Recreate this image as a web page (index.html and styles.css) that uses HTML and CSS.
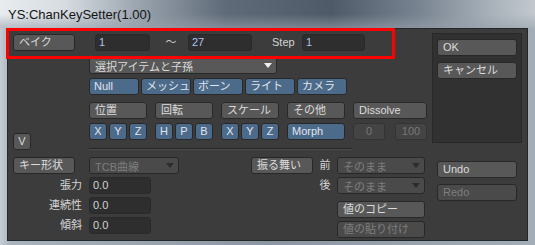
FILE: index.html
```html
<!DOCTYPE html>
<html lang="ja">
<head>
    <meta charset="UTF-8">
    <title>YS:ChanKeySetter(1.00)</title>
    <link rel="stylesheet" href="styles.css">
</head>
<body>
<div class="window">
    <div class="titlebar">YS:ChanKeySetter(1.00)</div>

    <div class="client">
        <div class="main">
            <!-- Bake range -->
            <div class="bake-row">
                <button class="btn bake">ベイク</button>
                <span class="field from">1</span>
                <span class="tilde">～</span>
                <span class="field to">27</span>
                <span class="lbl step">Step</span>
                <span class="field step-val">1</span>
            </div>

            <!-- Target & channels -->
            <div class="mid">
                <div class="mid-left">
                    <button class="btn v-btn">V</button>
                </div>
                <div class="mid-body">
                    <div class="popup target">選択アイテムと子孫<i class="arrow"></i></div>
                    <div class="types">
                        <button class="btn blue">Null</button>
                        <button class="btn blue">メッシュ</button>
                        <button class="btn blue">ボーン</button>
                        <button class="btn blue">ライト</button>
                        <button class="btn blue">カメラ</button>
                    </div>
                    <div class="channels">
                        <button class="btn">位置</button>
                        <button class="btn">回転</button>
                        <button class="btn">スケール</button>
                        <button class="btn">その他</button>
                        <button class="btn">Dissolve</button>

                        <div class="axes">
                            <button class="btn blue sq">X</button>
                            <button class="btn blue sq">Y</button>
                            <button class="btn blue sq">Z</button>
                        </div>
                        <div class="axes">
                            <button class="btn blue sq">H</button>
                            <button class="btn blue sq">P</button>
                            <button class="btn blue sq">B</button>
                        </div>
                        <div class="axes">
                            <button class="btn blue sq">X</button>
                            <button class="btn blue sq">Y</button>
                            <button class="btn blue sq">Z</button>
                        </div>
                        <button class="btn blue">Morph</button>
                        <div class="dissolve-range">
                            <span class="field off">0</span>
                            <span class="field off">100</span>
                        </div>
                    </div>
                    <div class="sep"></div>
                </div>
            </div>

            <!-- Key shape & behaviour -->
            <div class="bottom">
                <div class="bottom-left">
                    <button class="btn bake">キー形状</button>
                    <div class="lbl row-lbl">張力</div>
                    <div class="lbl row-lbl">連続性</div>
                    <div class="lbl row-lbl">傾斜</div>
                </div>
                <div class="bottom-mid">
                    <div class="popup off tcb">TCB曲線<i class="arrow"></i></div>
                    <span class="field num">0.0</span>
                    <span class="field num">0.0</span>
                    <span class="field num">0.0</span>
                </div>
                <div class="behave">
                    <button class="btn">振る舞い</button>
                    <span class="lbl mid-lbl">前</span>
                    <div class="popup off">そのまま<i class="arrow"></i></div>
                    <span></span>
                    <span class="lbl mid-lbl">後</span>
                    <div class="popup off">そのまま<i class="arrow"></i></div>
                    <button class="btn copy">値のコピー</button>
                    <button class="btn off paste">値の貼り付け</button>
                </div>
            </div>
        </div>

        <div class="side">
            <div class="panel">
                <button class="btn wide">OK</button>
                <button class="btn wide">キャンセル</button>
            </div>
            <button class="btn wide undo">Undo</button>
            <button class="btn wide off redo">Redo</button>
        </div>
    </div>

    <div class="mark"></div>
</div>
</body>
</html>
```

FILE: styles.css
```css
* { box-sizing: border-box; }
body {
    margin: 0;
    font-family: "Liberation Sans", "Noto Sans CJK JP", sans-serif;
    font-size: 11px;
    background: #8d99a5;
}
.window {
    position: relative;
    width: 535px;
    height: 245px;
    overflow: hidden;
    background: linear-gradient(90deg, #c4ccd3 0, #a9b3bd 2%, #8a96a2 50%, #a3adb7 100%);
}
.titlebar {
    height: 28px;
    line-height: 30px;
    padding-left: 8px;
    font-size: 13px;
    color: #141414;
    background:
        linear-gradient(180deg, rgba(150, 160, 170, 0) 50%, rgba(150, 160, 170, 0.6) 100%),
        linear-gradient(90deg, #e8ecef 0%, #d6dce1 12%, #96a0ab 27%, #5f6b78 42%, #4e5a68 62%, #778390 78%, #a6afb8 91%, #c2c8ce 100%);
}
.client {
    display: flex;
    margin-left: 7px;
    width: 521px;
    height: 213px;
    background: #3c3c3c;
    border: 1px solid #22272c;
}
.main { width: 424px; }

/* common controls */
.btn {
    display: block;
    height: 17px;
    margin: 0;
    padding: 0 4px 0 5px;
    font: inherit;
    line-height: 15px;
    text-align: left;
    white-space: nowrap;
    overflow: hidden;
    color: #dcdcdc;
    background: #585858;
    border: 1px solid #282828;
    border-radius: 3px;
}
.btn.blue { background: #4c6a8a; color: #e0e6ec; padding-left: 4px; }
.btn.sq { padding: 0; text-align: center; }
.btn.off { background: #4a4a4a; color: #7e7e7e; }
.field {
    display: block;
    height: 17px;
    padding-left: 3px;
    line-height: 15px;
    color: #d4d4d4;
    background: #2e2e2e;
    border: 1px solid #2a2a2a;
    border-radius: 3px;
}
.field.off {
    padding: 0;
    text-align: center;
    color: #787878;
    background: #444444;
    border-color: #333333;
}
.popup {
    display: flex;
    align-items: center;
    height: 17px;
    padding: 0 4px 0 5px;
    color: #dcdcdc;
    background: #585858;
    border: 1px solid #282828;
    border-radius: 3px;
    white-space: nowrap;
}
.popup .arrow {
    margin-left: auto;
    width: 0;
    height: 0;
    border-left: 4px solid transparent;
    border-right: 4px solid transparent;
    border-top: 5px solid #f0f0f0;
}
.popup.off { background: #4a4a4a; color: #7e7e7e; }
.popup.off .arrow { border-top-color: #2c2c2c; }
.lbl { color: #d4d4d4; line-height: 17px; }

/* bake row */
.bake-row { display: flex; height: 17px; margin-top: 5px; }
.bake { width: 62px; margin-left: 5px; }
.bake-row .field { color: #aec4f4; }
.from { width: 55px; margin-left: 20px; }
.tilde { width: 12px; margin-left: 15px; color: #d0d0d0; line-height: 17px; text-align: center; }
.to { width: 64px; margin-left: 11px; }
.step { width: 30px; margin-left: 20px; }
.step-val { width: 63px; }

/* target + channels */
.mid { display: flex; margin-top: 6px; }
.mid-left { width: 81px; }
.v-btn { width: 18px; margin: 76px 0 0 5px; padding: 0; text-align: center; }
.target { width: 188px; }
.types { display: flex; gap: 2px; margin-top: 4px; }
.types .btn { width: 50px; padding: 0 0 0 4px; }
.channels {
    display: grid;
    grid-template-columns: 58px 58px 58px 58px 74px;
    column-gap: 8px;
    row-gap: 4px;
    margin-top: 7px;
}
.axes { display: flex; gap: 2px; }
.axes .btn { width: 18px; }
.dissolve-range { display: flex; justify-content: space-between; }
.dissolve-range .field { width: 32px; }
.sep {
    width: 263px;
    margin-top: 8px;
    border-top: 1px solid #262626;
    border-bottom: 1px solid #4c4c4c;
}

/* key shape + behaviour */
.bottom { display: flex; margin-top: 7px; }
.bottom-left { width: 81px; display: flex; flex-direction: column; gap: 3px; }
.row-lbl { height: 17px; padding-right: 7px; text-align: right; }
.bottom-mid { width: 162px; display: flex; flex-direction: column; gap: 3px; }
.tcb { width: 90px; }
.num { width: 62px; }
.behave {
    display: grid;
    grid-template-columns: 62px 24px 88px;
    grid-auto-rows: 17px;
    row-gap: 3px;
    align-content: start;
}
.mid-lbl { text-align: center; }
.copy { grid-column: 3; margin-top: 4px; }
.paste { grid-column: 3; margin-top: 4px; }

/* right column */
.side { width: 90px; }
.panel {
    display: flex;
    flex-direction: column;
    gap: 6px;
    height: 110px;
    margin-top: 4px;
    padding: 5px 4px;
    background: #313131;
    border: 1px solid #292929;
}
.wide { width: 80px; }
.undo { margin: 18px 0 0 5px; }
.redo { margin: 6px 0 0 5px; }

/* annotation */
.mark {
    position: absolute;
    left: 6px;
    top: 28px;
    width: 389px;
    height: 31px;
    border: 3px solid #ff0000;
}
```
